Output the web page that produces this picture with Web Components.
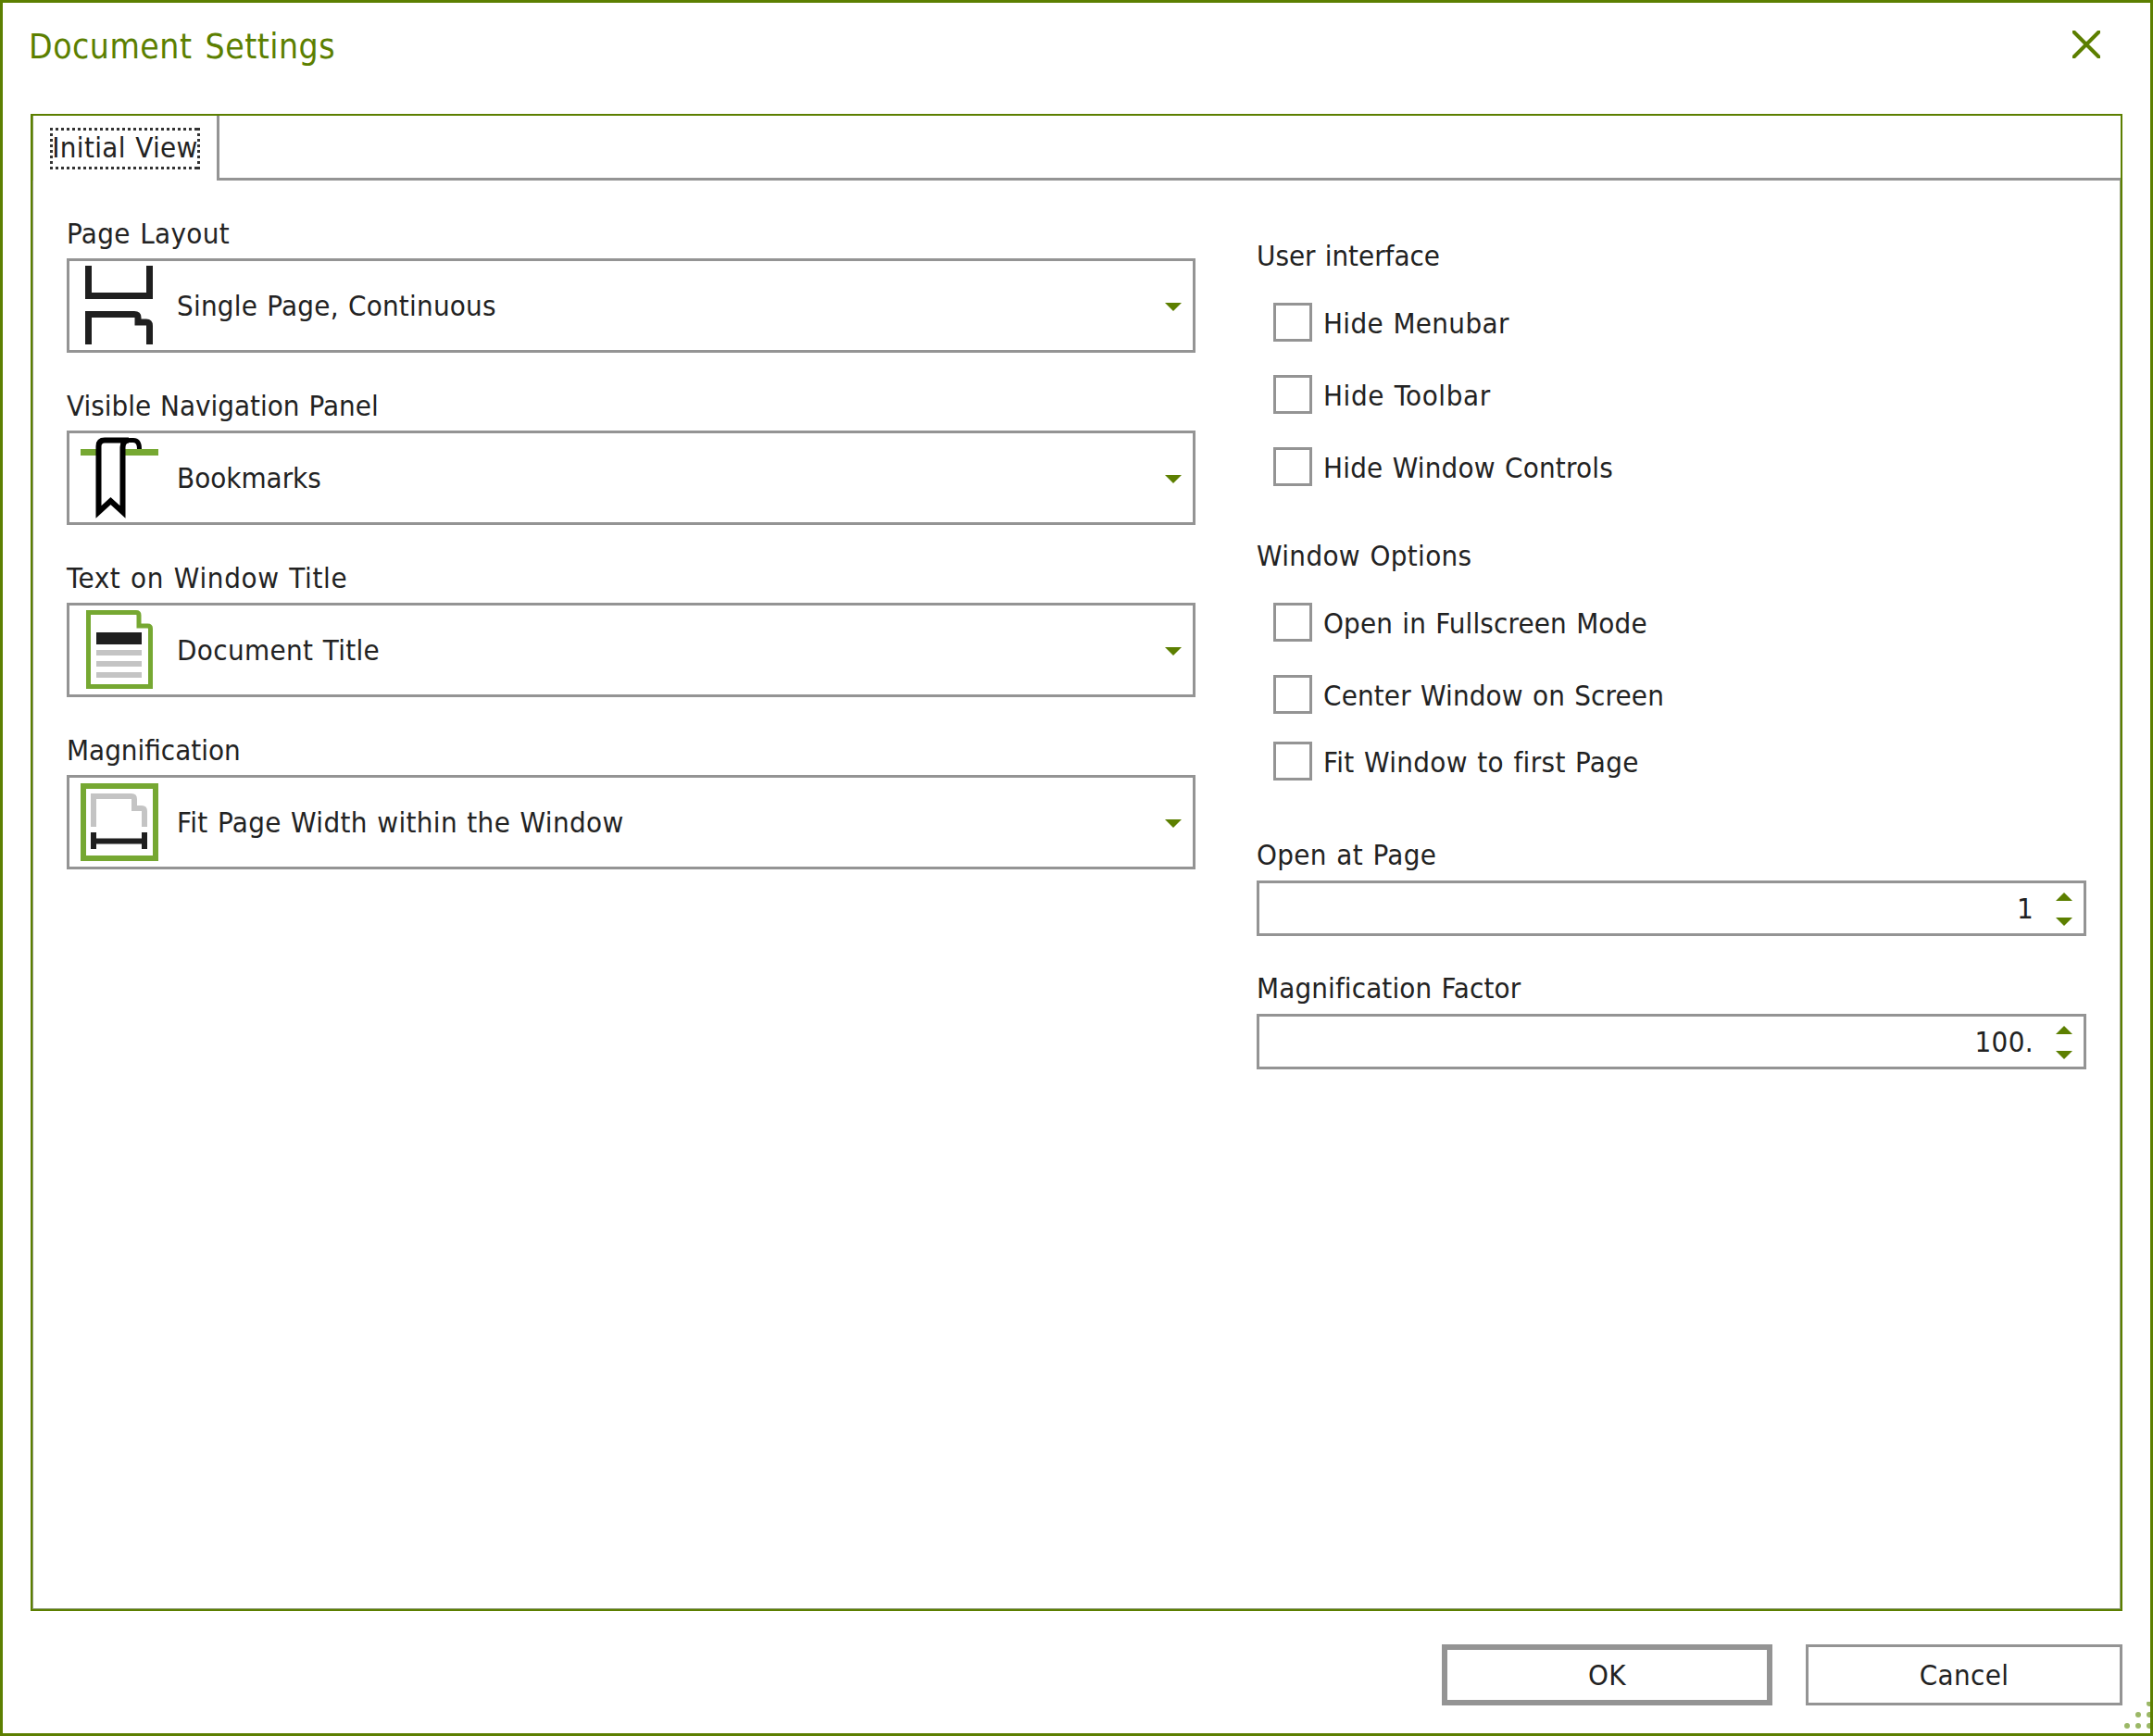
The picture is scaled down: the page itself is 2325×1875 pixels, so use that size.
<!DOCTYPE html>
<html lang="en"><head><meta charset="utf-8"><title>Document Settings</title>
<style>
html,body{margin:0;padding:0;background:#fff}
body{font-family:"DejaVu Sans Condensed","DejaVu Sans",sans-serif;font-stretch:condensed;font-size:31px;letter-spacing:.35px;word-spacing:1.2px;color:#222}
svg{display:block}
</style></head><body>
<ds-dialog heading="Document Settings">
  <ds-tabs tab="Initial View">
    <ds-column class="left" slot="left">
      <ds-combo label="Page Layout" value="Single Page, Continuous" style="--v-ls:.22px">
        <svg slot="icon" width="84" height="96" viewBox="0 0 84 96" fill="none" stroke="#1f1f1f" stroke-width="7"><path d="M8.5 5V37.500H74.500V5"/><path d="M8.5 90V57.500H58Q62 57.500 62 61V66H71Q74.500 66 74.500 70V90"/></svg>
      </ds-combo>
      <ds-combo label="Visible Navigation Panel" value="Bookmarks" style="--l-ls:0px;--v-ls:0px">
        <svg slot="icon" width="84" height="96" viewBox="0 0 84 96"><rect x="0" y="17" width="84" height="7" fill="#76a832"/><path d="M45.500 15Q45.500 7.500 53 7.500H57Q63.500 7.500 63.500 17" fill="none" stroke="#000" stroke-width="5"/><path d="M19.500 85V14Q19.500 7.500 26 7.500H52Q45.500 7.500 45.500 15V85L32.500 73Z" fill="#fff" stroke="#000" stroke-width="6" stroke-linejoin="miter"/></svg>
      </ds-combo>
      <ds-combo label="Text on Window Title" value="Document Title" style="--l-ls:.65px">
        <svg slot="icon" width="84" height="96" viewBox="0 0 84 96"><path d="M8.500 87.500V7.500H60Q63 7.500 63 10.500V22H72.500Q75.500 22 75.500 25V87.500Z" fill="#fff" stroke="#76a832" stroke-width="5"/><rect x="17" y="29" width="49" height="13" fill="#1f1f1f"/><rect x="17" y="48" width="49" height="6" fill="#c4c4c4"/><rect x="17" y="60" width="49" height="6" fill="#c4c4c4"/><rect x="17" y="72" width="49" height="6" fill="#c4c4c4"/></svg>
      </ds-combo>
      <ds-combo label="Magnification" value="Fit Page Width within the Window" style="--l-ls:0px">
        <svg slot="icon" width="84" height="96" viewBox="0 0 84 96"><rect x="3" y="9" width="78" height="78" fill="#fff" stroke="#76a832" stroke-width="6"/><path d="M14 53V20H55Q58 20 58 23V33H66Q69 33 69 36V53" fill="none" stroke="#c4c4c4" stroke-width="6"/><path d="M11 59h6v6.500h49V59h6v18h-6v-5.500H17V77h-6Z" fill="#1f1f1f"/></svg>
      </ds-combo>
    </ds-column>
    <ds-column class="right" slot="right">
      <ds-heading style="letter-spacing:0">User interface</ds-heading>
      <ds-check>Hide Menubar</ds-check>
      <ds-check gap="36" style="letter-spacing:.6px">Hide Toolbar</ds-check>
      <ds-check gap="36" style="letter-spacing:.2px">Hide Window Controls</ds-check>
      <ds-heading gap="54">Window Options</ds-heading>
      <ds-check style="letter-spacing:.15px">Open in Fullscreen Mode</ds-check>
      <ds-check gap="36" style="letter-spacing:.15px">Center Window on Screen</ds-check>
      <ds-check gap="30">Fit Window to first Page</ds-check>
      <ds-spin gap="59" label="Open at Page" value="1"></ds-spin>
      <ds-spin gap="35" label="Magnification Factor" value="100." style="--l-ls:.12px"></ds-spin>
    </ds-column>
  </ds-tabs>
  <ds-button slot="footer" default style="width:357px">OK</ds-button>
  <ds-button slot="footer" style="width:342px">Cancel</ds-button>
</ds-dialog>
<script>
const GREEN='#5c7f00', GREY='#949494';
function el(name,html,setup){
  customElements.define(name,class extends HTMLElement{
    constructor(){super();this.attachShadow({mode:'open'}).innerHTML=html(this)}
    connectedCallback(){setup&&setup(this)}
  });
}
const gapSetup=e=>{if(e.hasAttribute('gap'))e.style.marginTop=e.getAttribute('gap')+'px'};
const arrow=(up)=>`<svg style="display:block" width="18" height="9" viewBox="0 0 18 9"><path d="${up?'M9 0L18 9H0Z':'M0 0H18L9 9Z'}" fill="${GREEN}"/></svg>`;

el('ds-dialog',e=>`<style>
:host{display:flex;flex-direction:column;position:relative;box-sizing:border-box;width:2325px;height:1875px;border:3px solid ${GREEN};overflow:hidden;background:#fff}
.bar{height:120px;flex:none;display:flex;justify-content:space-between;padding:0 54px 0 28px;box-sizing:border-box}
h1{margin:0;font:inherit;font-size:37px;line-height:60px;color:${GREEN};font-weight:400;padding-top:18px;letter-spacing:.5px;word-spacing:3px}
.x{margin-top:30px}
.main{flex:1;display:flex;min-height:0;padding:0 30px}
::slotted(ds-tabs){flex:1}
.foot{height:132px;flex:none;box-sizing:border-box;padding:36px 30px 0;display:flex;justify-content:flex-end;gap:36px}
.grip{position:absolute;right:-3px;bottom:0;width:34px;height:34px}
</style>
<div class="bar"><h1>${e.getAttribute('heading')}</h1><svg class="x" width="30" height="30" viewBox="0 0 30 30"><path d="M1.500 1.500L28.500 28.500M28.500 1.500L1.500 28.500" stroke="${GREEN}" stroke-width="4" stroke-linecap="round"/></svg></div>
<div class="main"><slot></slot></div>
<div class="foot"><slot name="footer"></slot></div>
<svg class="grip" viewBox="0 0 34 34" fill="#9bb866"><circle cx="30" cy="2" r="3"/><circle cx="18" cy="14" r="3"/><circle cx="30" cy="14" r="3"/><circle cx="6" cy="26" r="3"/><circle cx="18" cy="26" r="3"/><circle cx="30" cy="26" r="3"/></svg>`);

el('ds-tabs',e=>`<style>
:host{display:flex;flex-direction:column;box-sizing:border-box;border:2px solid ${GREEN};height:100%}
.head{display:flex;height:70px;flex:none}
.tab{box-sizing:border-box;width:202px;border-left:1px solid #7f9a4e;border-right:3px solid ${GREY};padding:13px 18px 0 18px}
.focus{box-sizing:border-box;height:45px;display:flex;align-items:center;justify-content:center;padding-bottom:3px;white-space:nowrap;
background:repeating-linear-gradient(90deg,#333 0 3px,transparent 3px 6px) top/100% 3px no-repeat,repeating-linear-gradient(90deg,#333 0 3px,transparent 3px 6px) bottom/100% 3px no-repeat,repeating-linear-gradient(180deg,#333 0 3px,transparent 3px 6px) left/3px 100% no-repeat,repeating-linear-gradient(180deg,#333 0 3px,transparent 3px 6px) right/3px 100% no-repeat}
.fill{flex:1;border-bottom:3px solid ${GREY}}
.body{flex:1;display:flex;gap:66px;padding:36px 36px 0;border:1px solid #8f9c78;border-top:0}
</style>
<div class="head"><div class="tab"><div class="focus">${e.getAttribute('tab')}</div></div><div class="fill"></div></div>
<div class="body"><slot name="left"></slot><slot name="right"></slot></div>`);

el('ds-column',e=>`<style>
:host{display:flex;flex-direction:column}
:host(.left){width:1219px;gap:36px}
:host(.right){width:896px;margin-top:24px}
</style><slot></slot>`);

const LABEL=`line-height:43px;height:43px;white-space:nowrap;`;
el('ds-combo',e=>`<style>
:host{display:block}
.l{${LABEL}margin-bottom:5px;letter-spacing:var(--l-ls,.35px)}
.b{box-sizing:border-box;height:102px;border:3px solid ${GREY};display:flex;align-items:center;padding:0 12px}
.i{width:84px;height:96px;flex:none}
.v{flex:1;margin-left:20px;white-space:nowrap;letter-spacing:var(--v-ls,.35px)}
.a{margin-top:3px}
</style><div class="l">${e.getAttribute('label')}</div>
<div class="b"><div class="i"><slot name="icon"></slot></div><div class="v">${e.getAttribute('value')}</div><div class="a">${arrow(false)}</div></div>`);

el('ds-heading',e=>`<style>:host{display:block;${LABEL}margin-bottom:29px}</style><slot></slot>`,gapSetup);

el('ds-check',e=>`<style>
:host{display:flex;align-items:center;height:42px;padding-left:18px;gap:12px;white-space:nowrap}
.c{box-sizing:border-box;width:42px;height:42px;border:3px solid ${GREY};flex:none}
.t{padding-top:1px}
</style><div class="c"></div><div class="t"><slot></slot></div>`,gapSetup);

el('ds-spin',e=>`<style>
:host{display:block}
.l{${LABEL}margin-bottom:6px;letter-spacing:var(--l-ls,.35px)}
.b{box-sizing:border-box;height:60px;border:3px solid ${GREY};display:flex;align-items:center;justify-content:flex-end;padding-right:12px}
.v{margin-right:24px}
.s{display:flex;flex-direction:column;gap:18px;margin-top:1px}
</style><div class="l">${e.getAttribute('label')}</div>
<div class="b"><div class="v">${e.getAttribute('value')}</div><div class="s">${arrow(true)}${arrow(false)}</div></div>`,gapSetup);

el('ds-button',e=>`<style>
:host{display:flex;align-items:center;justify-content:center;box-sizing:border-box;height:66px;border:${e.hasAttribute('default')?6:3}px solid ${GREY};white-space:nowrap}
</style><slot></slot>`);
</script>
</body></html>
